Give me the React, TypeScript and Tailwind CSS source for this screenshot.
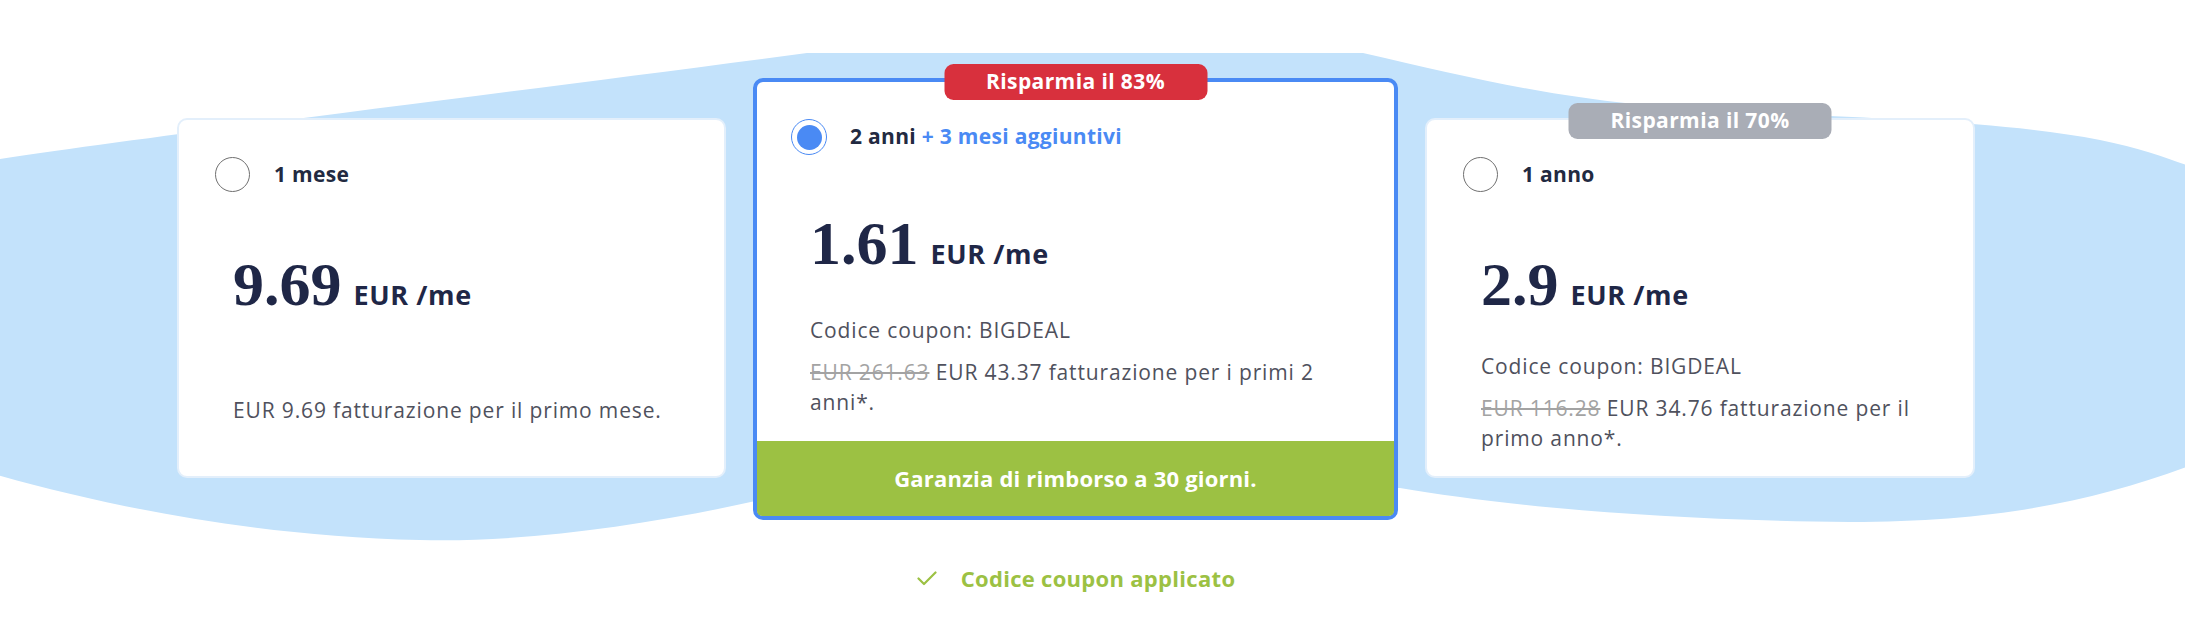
import React from "react";

const sans = "font-['Open_Sans',_'Liberation_Sans',_sans-serif]";
const serif = "font-['Liberation_Serif',_serif]";
const body = "text-[21px] leading-[30px] tracking-[0.85px] text-[#4f515d] whitespace-nowrap";
const label = "text-[21px] font-bold tracking-[0.3px] text-[#222a41] whitespace-nowrap";

function Radio({ selected }: { selected?: boolean }) {
  if (selected) {
    return (
      <div className="w-[36px] h-[36px] rounded-full border-[1.5px] border-[#4a8af4] flex items-center justify-center shrink-0">
        <div className="w-[25px] h-[25px] rounded-full bg-[#4a8af4]" />
      </div>
    );
  }
  return <div className="w-[35px] h-[35px] rounded-full border-[1.5px] border-[#707070] shrink-0" />;
}

function Price({ value }: { value: string }) {
  return (
    <div className="flex items-baseline h-[60px] leading-[60px]">
      <span className={`${serif} text-[62px] font-bold text-[#1f2747]`}>{value}</span>
      <span className={`${sans} ml-[12px] text-[27px] font-bold tracking-[0.6px] text-[#1f2747]`}>EUR /me</span>
    </div>
  );
}

export default function App() {
  return (
    <div className={`relative w-full h-[637px] bg-white overflow-hidden ${sans}`}>
      <svg
        className="absolute left-0 top-0"
        width="2185"
        height="637"
        viewBox="0 0 2185 637"
      >
        <path
          d="M -20 162 C 150 136, 450 100, 807 53 L 1363 53 C 1480 80, 1560 100, 1700 110 C 1850 118, 2000 120, 2100 140 C 2150 150, 2185 165, 2200 170 L 2200 462 C 2100 500, 2000 522, 1850 522 C 1650 520, 1500 505, 1400 488 L 760 500 C 650 525, 520 543, 420 540 C 250 536, 100 505, -20 470 Z"
          fill="#c3e2fb"
        />
      </svg>

      <div className="relative ml-[177px] w-[1798px] pt-[78px] flex flex-col items-center">
        <div className="flex items-start gap-[27px]">
          {/* Card 1 */}
          <div className="mt-[40px] w-[549px] h-[360px] rounded-[10px] border-2 border-[#e3effb] bg-white pt-[37px] pl-[36px] flex flex-col">
            <div className="flex items-center h-[35px] gap-[24px]">
              <Radio />
              <span className={label}>1 mese</span>
            </div>
            <div className="mt-[62px] ml-[18px]">
              <Price value="9.69" />
            </div>
            <p className={`mt-[81px] ml-[18px] ${body}`}>
              EUR 9.69 fatturazione per il primo mese.
            </p>
          </div>

          {/* Card 2 - featured */}
          <div className="relative w-[645px] h-[442px] rounded-[10px] border-4 border-[#4a8af4] bg-white flex flex-col">
            <div className="absolute -top-[18px] left-1/2 -translate-x-1/2 w-[263px] h-[36px] rounded-[9px] bg-[#d8303d] flex items-center justify-center text-white text-[21px] font-bold tracking-[0.4px]">
              Risparmia il 83%
            </div>
            <div className="pt-[37px] pl-[34px] flex flex-col">
              <div className="flex items-center h-[36px] gap-[23px]">
                <Radio selected />
                <span className={label}>
                  2 anni <span className="text-[#4a8af4]">+ 3 mesi aggiuntivi</span>
                </span>
              </div>
              <div className="mt-[58px] ml-[19px]">
                <Price value="1.61" />
              </div>
              <p className={`mt-[42px] ml-[19px] ${body}`}>Codice coupon: BIGDEAL</p>
              <p className={`mt-[12px] ml-[19px] ${body}`}>
                <span className="line-through text-[#a3a3a3]">EUR 261.63</span> EUR 43.37 fatturazione per i primi 2
                <br />
                anni*.
              </p>
            </div>
            <div className="mt-auto h-[75px] bg-[#9cc143] rounded-b-[5px] flex items-center justify-center text-white text-[22px] font-bold tracking-[0.2px]">
              Garanzia di rimborso a 30 giorni.
            </div>
          </div>

          {/* Card 3 */}
          <div className="relative mt-[40px] w-[550px] h-[360px] rounded-[10px] border-2 border-[#e3effb] bg-white pt-[37px] pl-[36px] flex flex-col">
            <div className="absolute -top-[17px] left-1/2 -translate-x-1/2 w-[263px] h-[36px] rounded-[9px] bg-[#a9adb6] flex items-center justify-center text-white text-[21px] font-bold tracking-[0.4px]">
              Risparmia il 70%
            </div>
            <div className="flex items-center h-[35px] gap-[24px]">
              <Radio />
              <span className={label}>1 anno</span>
            </div>
            <div className="mt-[62px] ml-[18px]">
              <Price value="2.9" />
            </div>
            <p className={`mt-[37px] ml-[18px] ${body}`}>Codice coupon: BIGDEAL</p>
            <p className={`mt-[12px] ml-[18px] ${body} leading-[29px]`}>
              <span className="line-through text-[#a3a3a3]">EUR 116.28</span> EUR 34.76 fatturazione per il
              <br />
              primo anno*.
            </p>
          </div>
        </div>

        <div className="mt-[43px] flex items-center gap-[24px] h-[30px]">
          <svg width="20" height="15" viewBox="0 0 20 15" fill="none">
            <path d="M1.5 7.5 L7 13 L18.5 1.5" stroke="#9cc143" strokeWidth="2.2" strokeLinecap="round" strokeLinejoin="round" />
          </svg>
          <span className="text-[22px] font-bold tracking-[0.3px] text-[#9cc143]">Codice coupon applicato</span>
        </div>
      </div>
    </div>
  );
}
